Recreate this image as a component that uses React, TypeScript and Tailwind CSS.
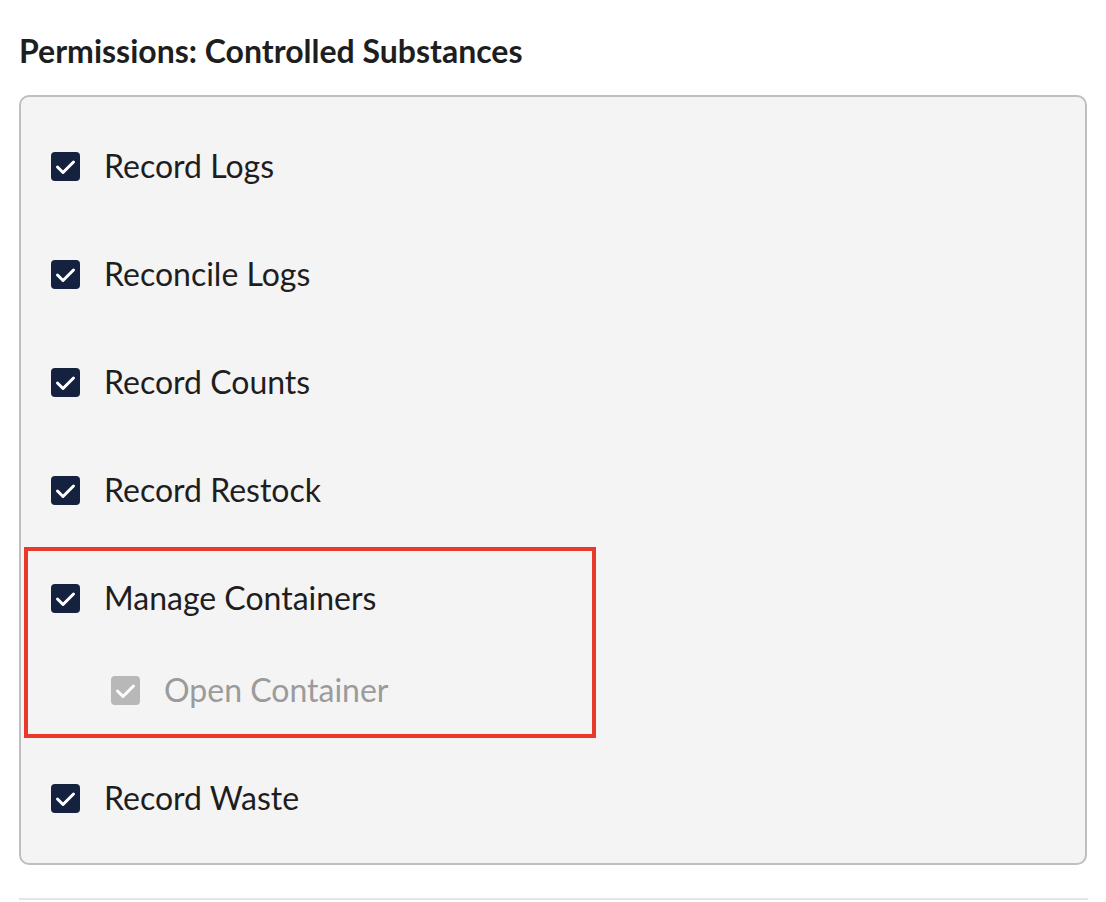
import React from 'react'

// Controlled substances permission list, one nested child under Manage Containers.

type Perm = { id: string; label: string; children?: Perm[] }

const PERMS: Perm[] = [
  { id: 'record_logs', label: 'Record Logs' },
  { id: 'reconcile_logs', label: 'Reconcile Logs' },
  { id: 'record_counts', label: 'Record Counts' },
  { id: 'record_restock', label: 'Record Restock' },
  { id: 'manage_containers', label: 'Manage Containers', children: [{ id: 'open_container', label: 'Open Container' }] },
  { id: 'record_waste', label: 'Record Waste' },
]

function Check({ disabled }: { disabled?: boolean }) {
  return (
    <span
      className={`flex h-[29px] w-[29px] shrink-0 items-center justify-center rounded-[4px] ${
        disabled ? 'bg-[#b8b8b8]' : 'bg-[#14213f]'
      }`}
    >
      <svg viewBox="0 0 29 29" className="h-[29px] w-[29px]" fill="none">
        <path d="M6.5 15l5.5 5.5 10.5-10.5" stroke="white" strokeWidth="3" strokeLinecap="round" strokeLinejoin="round" />
      </svg>
    </span>
  )
}

function Row({ label, disabled }: { label: string; disabled?: boolean }) {
  return (
    <label className="flex h-[40px] items-center gap-[24px]">
      <Check disabled={disabled} />
      <span className={`text-[32px] leading-none ${disabled ? 'text-[#9b9b9b]' : 'text-[#1e1e1e]'}`}>{label}</span>
    </label>
  )
}

export default function App() {
  return (
    <div className="min-h-[902px] bg-white px-[19px] pt-[33px]" style={{ fontFamily: 'Lato, "Noto Sans", sans-serif' }}>
      <h2 className="text-[32px] font-bold leading-[36px] text-[#1e1e1e]">Permissions: Controlled Substances</h2>
      <div className="mt-[26px] w-[1068px] rounded-[10px] border-2 border-[#bfbfbf] bg-[#f4f4f4] pb-[45px] pl-[30px] pt-[49px]">
        <div className="flex flex-col gap-[68px]">
          {PERMS.map((p) =>
            p.children ? (
              <div key={p.id} className="relative flex flex-col gap-[52px]">
                <Row label={p.label} />
                {p.children.map((c) => (
                  <div key={c.id} className="pl-[60px]">
                    <Row label={c.label} disabled />
                  </div>
                ))}
                {/* annotation box */}
                <div className="pointer-events-none absolute left-[-27px] top-[-31px] h-[191px] w-[572px] border-4 border-[#e8392b]" />
              </div>
            ) : (
              <Row key={p.id} label={p.label} />
            ),
          )}
        </div>
      </div>
      <div className="mt-[33px] h-[2px] w-[1069px] bg-[#e4e4e4]" />
    </div>
  )
}
